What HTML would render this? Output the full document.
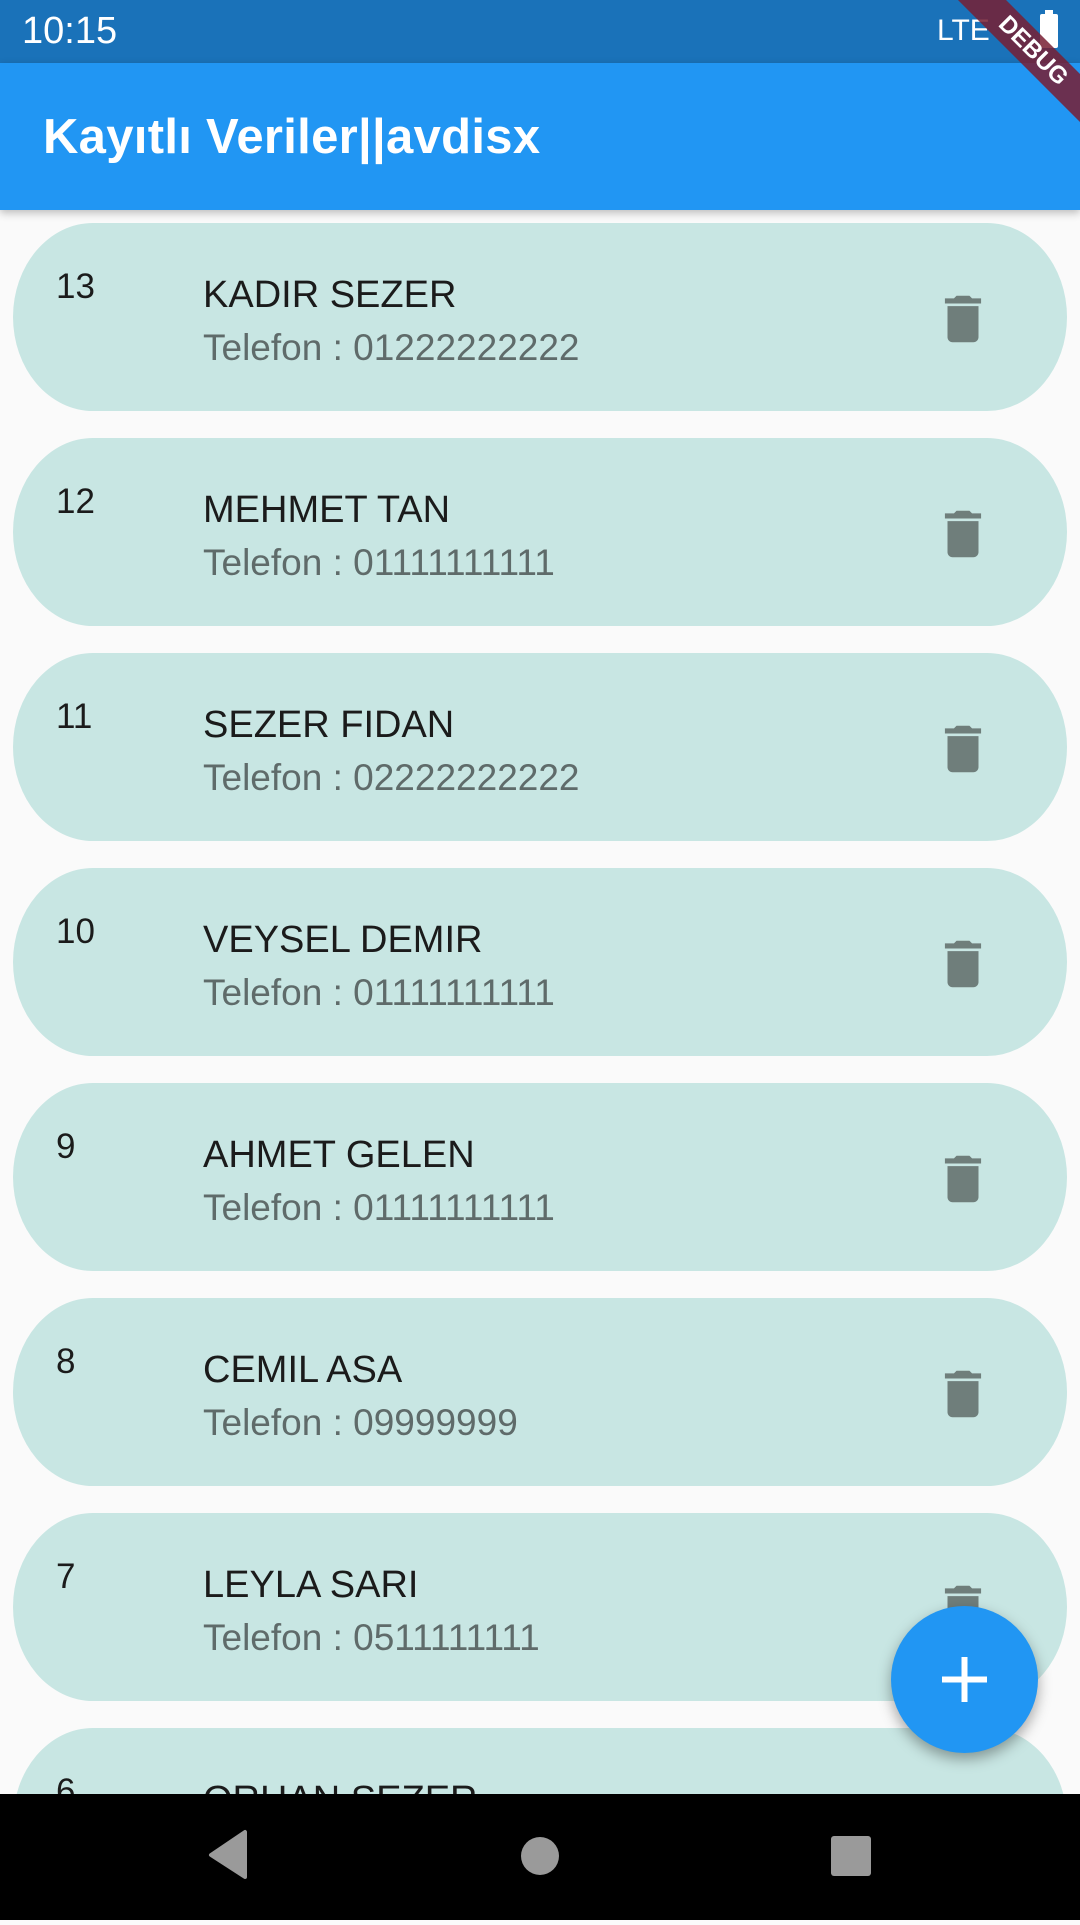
<!DOCTYPE html>
<html><head><meta charset="utf-8"><style>
*{margin:0;padding:0;box-sizing:border-box}
body{width:1080px;height:1920px;overflow:hidden;background:#fafafa;font-family:"Liberation Sans",Roboto,sans-serif;position:relative}
.status{position:absolute;top:0;left:0;width:1080px;height:63px;background:#1a72b9;color:#fff}
.appbar{position:absolute;top:63px;left:0;width:1080px;height:147px;background:#2196f3;box-shadow:0 3px 8px rgba(0,0,0,.25);z-index:2}
.appbar h1{position:absolute;left:43px;top:46px;font-size:49px;font-weight:bold;color:#fff;letter-spacing:0.3px}
.card{position:absolute;left:13px;width:1054px;height:188px;background:#c8e6e3;border-radius:80px/94px}
.num{position:absolute;left:43px;top:44px;font-size:35px;color:#1b1b1b}
.name{position:absolute;left:190px;top:51px;font-size:38px;color:#1b1b1b}
.tel{position:absolute;left:190px;top:104px;font-size:37px;color:#5f6b6a}
.trash{position:absolute;left:919px;top:65px}
.fab{position:absolute;left:891px;top:1606px;width:147px;height:147px;border-radius:50%;background:#2196f3;box-shadow:0 6px 14px rgba(0,0,0,.35);z-index:3}
.nav{position:absolute;top:1794px;left:0;width:1080px;height:126px;background:#000;z-index:4}
.ribbon{position:absolute;top:34px;right:-58px;width:210px;height:34px;background:rgba(120,30,50,.85);transform:rotate(45deg);color:#fff;font-weight:bold;font-size:24px;text-align:center;line-height:34px;z-index:5}
</style></head><body>
<div class="status">
<div style="position:absolute;left:22px;top:10px;font-size:38px">10:15</div>
<div style="position:absolute;left:937px;top:14px;font-size:30px">LTE</div>
<div style="position:absolute;left:1040px;top:14px;width:18px;height:34px;background:#fff;border-radius:2px"></div>
<div style="position:absolute;left:1045px;top:10px;width:8px;height:5px;background:#fff"></div>
</div>
<div class="ribbon">DEBUG</div>
<div class="appbar"><h1>Kayıtlı Veriler||avdisx</h1></div>

<div class="card" style="top:223px"><div class="num">13</div><div class="name">KADIR SEZER</div><div class="tel">Telefon : 01222222222</div>
<svg class="trash" width="62" height="62" viewBox="0 0 24 24"><path fill="#6f7e7b" d="M6 19c0 1.1.9 2 2 2h8c1.1 0 2-.9 2-2V7H6v12zM19 4h-3.5l-1-1h-5l-1 1H5v2h14V4z"/></svg></div>
<div class="card" style="top:438px"><div class="num">12</div><div class="name">MEHMET TAN</div><div class="tel">Telefon : 01111111111</div>
<svg class="trash" width="62" height="62" viewBox="0 0 24 24"><path fill="#6f7e7b" d="M6 19c0 1.1.9 2 2 2h8c1.1 0 2-.9 2-2V7H6v12zM19 4h-3.5l-1-1h-5l-1 1H5v2h14V4z"/></svg></div>
<div class="card" style="top:653px"><div class="num">11</div><div class="name">SEZER FIDAN</div><div class="tel">Telefon : 02222222222</div>
<svg class="trash" width="62" height="62" viewBox="0 0 24 24"><path fill="#6f7e7b" d="M6 19c0 1.1.9 2 2 2h8c1.1 0 2-.9 2-2V7H6v12zM19 4h-3.5l-1-1h-5l-1 1H5v2h14V4z"/></svg></div>
<div class="card" style="top:868px"><div class="num">10</div><div class="name">VEYSEL DEMIR</div><div class="tel">Telefon : 01111111111</div>
<svg class="trash" width="62" height="62" viewBox="0 0 24 24"><path fill="#6f7e7b" d="M6 19c0 1.1.9 2 2 2h8c1.1 0 2-.9 2-2V7H6v12zM19 4h-3.5l-1-1h-5l-1 1H5v2h14V4z"/></svg></div>
<div class="card" style="top:1083px"><div class="num">9</div><div class="name">AHMET GELEN</div><div class="tel">Telefon : 01111111111</div>
<svg class="trash" width="62" height="62" viewBox="0 0 24 24"><path fill="#6f7e7b" d="M6 19c0 1.1.9 2 2 2h8c1.1 0 2-.9 2-2V7H6v12zM19 4h-3.5l-1-1h-5l-1 1H5v2h14V4z"/></svg></div>
<div class="card" style="top:1298px"><div class="num">8</div><div class="name">CEMIL ASA</div><div class="tel">Telefon : 09999999</div>
<svg class="trash" width="62" height="62" viewBox="0 0 24 24"><path fill="#6f7e7b" d="M6 19c0 1.1.9 2 2 2h8c1.1 0 2-.9 2-2V7H6v12zM19 4h-3.5l-1-1h-5l-1 1H5v2h14V4z"/></svg></div>
<div class="card" style="top:1513px"><div class="num">7</div><div class="name">LEYLA SARI</div><div class="tel">Telefon : 0511111111</div>
<svg class="trash" width="62" height="62" viewBox="0 0 24 24"><path fill="#6f7e7b" d="M6 19c0 1.1.9 2 2 2h8c1.1 0 2-.9 2-2V7H6v12zM19 4h-3.5l-1-1h-5l-1 1H5v2h14V4z"/></svg></div>
<div class="card" style="top:1728px"><div class="num">6</div><div class="name">ORHAN SEZER</div><div class="tel">Telefon : 0</div></div>

<div class="fab"><svg width="147" height="147" viewBox="0 0 147 147"><path d="M73.5 51v45M51 73.5h45" stroke="#fff" stroke-width="6"/></svg></div>
<div class="nav">
<svg width="1080" height="126"><path d="M245 38v45L211 61z" fill="#9a9a9a" stroke="#9a9a9a" stroke-width="4" stroke-linejoin="round"/><circle cx="540" cy="62" r="19" fill="#9a9a9a"/><rect x="831" y="42" width="40" height="40" rx="3" fill="#9a9a9a"/></svg>
</div>
</body></html>
